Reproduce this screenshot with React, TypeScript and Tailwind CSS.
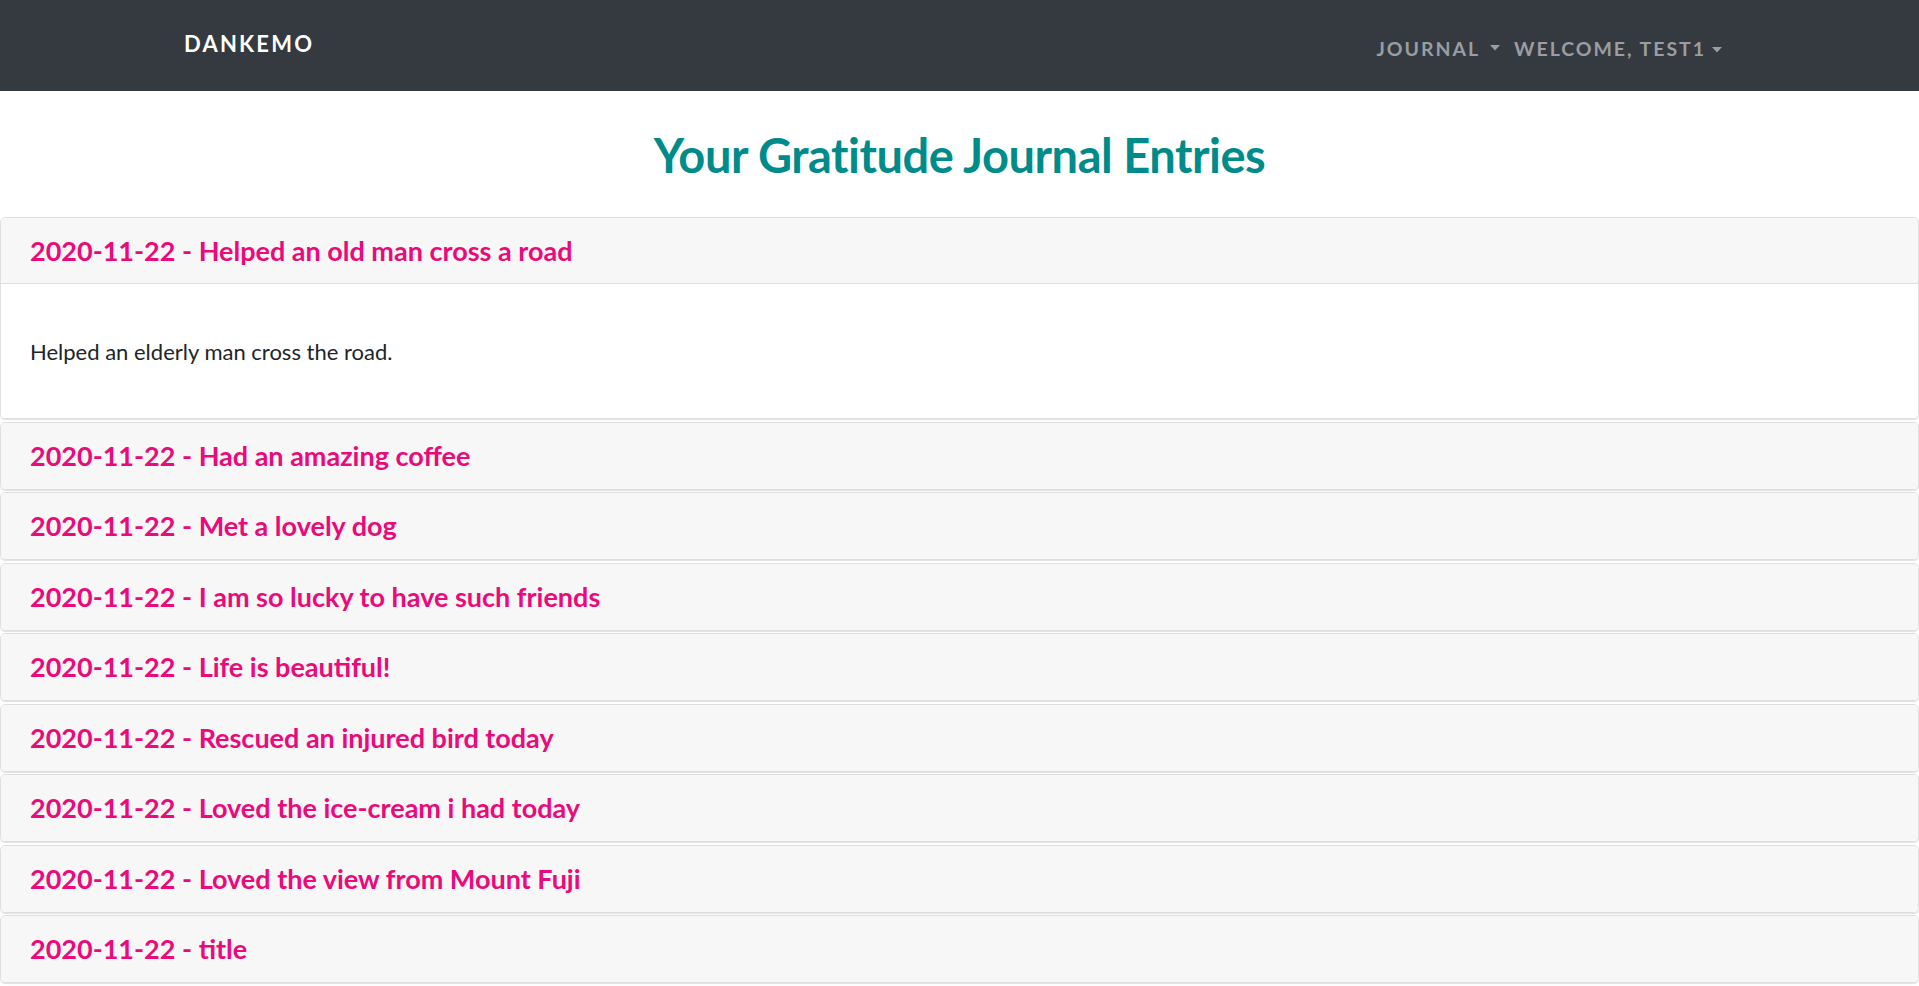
import React from 'react';

const entries = [
  { date: '2020-11-22', title: 'Helped an old man cross a road', body: 'Helped an elderly man cross the road.' },
  { date: '2020-11-22', title: 'Had an amazing coffee', body: '' },
  { date: '2020-11-22', title: 'Met a lovely dog', body: '' },
  { date: '2020-11-22', title: 'I am so lucky to have such friends', body: '' },
  { date: '2020-11-22', title: 'Life is beautiful!', body: '' },
  { date: '2020-11-22', title: 'Rescued an injured bird today', body: '' },
  { date: '2020-11-22', title: 'Loved the ice-cream i had today', body: '' },
  { date: '2020-11-22', title: 'Loved the view from Mount Fuji', body: '' },
  { date: '2020-11-22', title: 'title', body: '' },
];

const Caret: React.FC = () => (
  <svg width="10" height="6" viewBox="0 0 10 6" className="inline-block ml-[10px] mb-[3px]">
    <path d="M0 0 L10 0 L5 5.5 Z" fill="currentColor" />
  </svg>
);

const App: React.FC = () => {
  return (
    <div className="min-h-screen bg-white font-['Lato',sans-serif] text-[#212529]">
      {/* navbar */}
      <nav className="h-[91px] bg-[#343a40] flex items-start justify-between pl-[184px] pr-[197px]">
        <a className="mt-[29px] text-white font-bold text-[22px] tracking-[0.1em] uppercase leading-[30px]">Dankemo</a>
        <div className="mt-[35px] flex items-center text-[#9a9da1] font-bold text-[19.5px] tracking-[0.1em] uppercase leading-[28px]">
          <span className="flex items-center">
            Journal
            <Caret />
          </span>
          <span className="flex items-center ml-[14px]">
            Welcome, Test1
            <span className="-ml-[4px]">
              <Caret />
            </span>
          </span>
        </div>
      </nav>

      <main>
        <div className="h-[126px] flex items-center justify-center">
          <h1 className="text-[#008b8b] font-bold text-[47px] tracking-[-0.01em] leading-[56px] mt-[2px]">
            Your Gratitude Journal Entries
          </h1>
        </div>

        <div className="flex flex-col gap-[2.5px]">
          {entries.map((e, i) => (
            <div
              key={i}
              className="border border-[#dfdfdf] rounded-[5px] overflow-hidden shadow-[0_1px_1px_rgba(0,0,0,0.12)]"
            >
              <div className={`h-[66px] bg-[#f7f7f7] flex items-center px-[29px] ${i === 0 ? 'border-b border-[#dfdfdf]' : ''}`}>
                <h5 className="text-[#ea0a7a] font-bold text-[27px] leading-[32px]">
                  {e.date} - {e.title}
                </h5>
              </div>
              {i === 0 && (
                <div className="bg-white px-[29px] pt-[52px] pb-[51px]">
                  <p className="text-[22px] leading-[31px]">{e.body}</p>
                </div>
              )}
            </div>
          ))}
        </div>
      </main>
    </div>
  );
};

export default App;
